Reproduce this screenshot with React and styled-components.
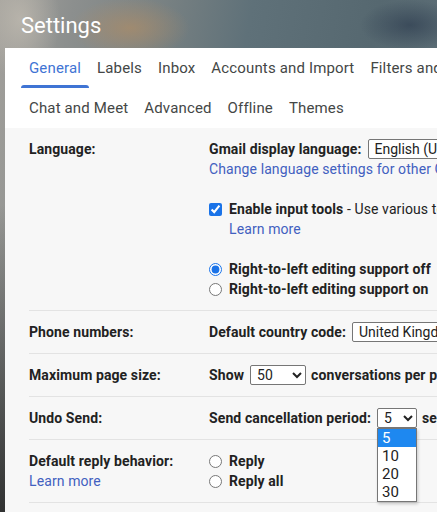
import styled, { createGlobalStyle } from 'styled-components';

const GlobalStyle = createGlobalStyle`
    html, body {
        margin: 0;
        padding: 0;
        overflow: hidden;
    }
    body {
        font-family: Roboto, "Liberation Sans", Arial, sans-serif;
        color: #202124;
    }
`;

const Page = styled.div`
    width: 437px;
    height: 512px;
    overflow: hidden;
    background:
        linear-gradient(to bottom, rgba(0, 0, 0, 0) 40%, rgba(20, 20, 20, 0.75) 100%),
        radial-gradient(ellipse 60px 30px at 130px 28px, rgba(170, 140, 105, 0.75), rgba(170, 140, 105, 0) 100%),
        radial-gradient(ellipse 40px 60px at 20px 20px, rgba(190, 185, 175, 0.8), rgba(190, 185, 175, 0) 100%),
        radial-gradient(ellipse 50px 25px at 410px 25px, rgba(40, 55, 75, 0.6), rgba(40, 55, 75, 0) 100%),
        linear-gradient(100deg, #a3a19c 0%, #8c8f8e 14%, #7d8484 28%, #5f7179 48%, #566870 72%, #60717a 100%);
`;

const Title = styled.h1`
    margin: 0;
    height: 48px;
    padding-left: 21px;
    font-family: Roboto, "Open Sans", sans-serif;
    font-size: 22px;
    font-weight: 400;
    line-height: 51px;
    color: #ffffff;
`;

const Panel = styled.div`
    margin-left: 5px;
    width: 1000px;
    white-space: nowrap;
`;

const TabBar = styled.nav`
    background: #ffffff;
    padding-left: 16px;
`;

const TabRow = styled.div`
    display: flex;
    height: 40px;
`;

const Tab = styled.div`
    position: relative;
    padding: 0 8px;
    font-size: 15px;
    letter-spacing: 0.15px;
    line-height: 40px;
    color: ${({ $active }) => ($active ? '#3f74d4' : '#444746')};

    &::after {
        content: '';
        display: ${({ $active }) => ($active ? 'block' : 'none')};
        position: absolute;
        left: 0;
        right: 0;
        bottom: 0;
        height: 3px;
        border-radius: 3px 3px 0 0;
        background: #3f74d4;
    }
`;

const Content = styled.div`
    background: #f7f7f7;
    padding-left: 24px;
    height: 400px;
`;

const Row = styled.div`
    display: grid;
    grid-template-columns: 180px auto;
    padding: 11px 0;
    border-bottom: 1px solid #e3e3e3;
    font-size: 14px;
    letter-spacing: 0.1px;
    line-height: 20px;
`;

const Label = styled.div`
    font-weight: 700;
    color: #222222;
`;

const Value = styled.div`
    display: flex;
    flex-direction: column;
`;

const Line = styled.div`
    display: flex;
    align-items: center;
    height: 20px;
    margin-top: ${({ $gap }) => ($gap ? '20px' : '0')};
    padding-left: ${({ $indent }) => ($indent ? '20px' : '0')};
    color: #222222;
`;

const Strong = styled.b`
    font-weight: 700;
    margin-right: ${({ $space }) => ($space ? '6px' : '0')};
    margin-left: ${({ $lead }) => ($lead ? '5px' : '0')};
`;

const Link = styled.a`
    color: #4260c0;
    text-decoration: none;
    cursor: pointer;
`;

const Select = styled.select`
    box-sizing: border-box;
    height: 20px;
    width: ${({ $w }) => $w}px;
    padding: 0 2px;
    font-family: Roboto, "Liberation Sans", sans-serif;
    font-size: 14px;
    color: #222222;
    background: #ffffff;
    border: 1px solid #767676;
    border-radius: 2px;
`;

const Check = styled.input`
    width: 13px;
    height: 13px;
    margin: 0 7px 0 0;
    accent-color: #1a73e8;
`;

const SelectWrap = styled.span`
    position: relative;
    display: inline-flex;
`;

const Menu = styled.ul`
    position: absolute;
    top: 20px;
    left: 0;
    z-index: 2;
    box-sizing: border-box;
    width: 40px;
    margin: 0;
    padding: 0;
    list-style: none;
    background: #ffffff;
    border: 1px solid #767676;
    box-shadow: 1px 2px 3px rgba(0, 0, 0, 0.2);
`;

const MenuItem = styled.li`
    height: 18px;
    padding-left: 4px;
    font-size: 15px;
    line-height: 18px;
    color: ${({ $active }) => ($active ? '#ffffff' : '#222222')};
    background: ${({ $active }) => ($active ? '#1e88f0' : 'transparent')};
`;

const row1 = ['General', 'Labels', 'Inbox', 'Accounts and Import', 'Filters and Blocked Addresses'];
const row2 = ['Chat and Meet', 'Advanced', 'Offline', 'Themes'];

const App = () => {
    return (
        <Page>
            <GlobalStyle />
            <Title>Settings</Title>
            <Panel>
                <TabBar>
                    <TabRow>
                        {row1.map((t, i) => (
                            <Tab key={t} $active={i === 0}>{t}</Tab>
                        ))}
                    </TabRow>
                    <TabRow>
                        {row2.map((t) => (
                            <Tab key={t}>{t}</Tab>
                        ))}
                    </TabRow>
                </TabBar>

                <Content>
                    <Row>
                        <Label>Language:</Label>
                        <Value>
                            <Line>
                                <Strong $space>Gmail display language:</Strong>
                                <Select $w={120} defaultValue="en">
                                    <option value="en">English (US)</option>
                                </Select>
                            </Line>
                            <Line>
                                <Link>Change language settings for other Google products</Link>
                            </Line>
                            <Line $gap>
                                <Check type="checkbox" defaultChecked />
                                <Strong>Enable input tools</Strong>&nbsp;- Use various text input tools to type in the language of your choice
                            </Line>
                            <Line $indent>
                                <Link>Learn more</Link>
                            </Line>
                            <Line $gap>
                                <Check type="radio" name="rtl" defaultChecked />
                                <Strong>Right-to-left editing support off</Strong>
                            </Line>
                            <Line>
                                <Check type="radio" name="rtl" />
                                <Strong>Right-to-left editing support on</Strong>
                            </Line>
                        </Value>
                    </Row>

                    <Row>
                        <Label>Phone numbers:</Label>
                        <Value>
                            <Line>
                                <Strong $space>Default country code:</Strong>
                                <Select $w={160} defaultValue="uk">
                                    <option value="uk">United Kingdom</option>
                                </Select>
                            </Line>
                        </Value>
                    </Row>

                    <Row>
                        <Label>Maximum page size:</Label>
                        <Value>
                            <Line>
                                <Strong $space>Show</Strong>
                                <Select $w={56} defaultValue="50">
                                    <option value="50">50</option>
                                </Select>
                                <Strong $lead>conversations per page</Strong>
                            </Line>
                        </Value>
                    </Row>

                    <Row>
                        <Label>Undo Send:</Label>
                        <Value>
                            <Line>
                                <Strong $space>Send cancellation period:</Strong>
                                <SelectWrap>
                                    <Select $w={40} defaultValue="5">
                                        <option value="5">5</option>
                                    </Select>
                                    <Menu>
                                        {['5', '10', '20', '30'].map((n, i) => (
                                            <MenuItem key={n} $active={i === 0}>{n}</MenuItem>
                                        ))}
                                    </Menu>
                                </SelectWrap>
                                <Strong $lead>seconds</Strong>
                            </Line>
                        </Value>
                    </Row>

                    <Row>
                        <Value>
                            <Label>Default reply behavior:</Label>
                            <Link>Learn more</Link>
                        </Value>
                        <Value>
                            <Line>
                                <Check type="radio" name="reply" />
                                <Strong>Reply</Strong>
                            </Line>
                            <Line>
                                <Check type="radio" name="reply" />
                                <Strong>Reply all</Strong>
                            </Line>
                        </Value>
                    </Row>
                </Content>
            </Panel>
        </Page>
    );
};

export default App;
